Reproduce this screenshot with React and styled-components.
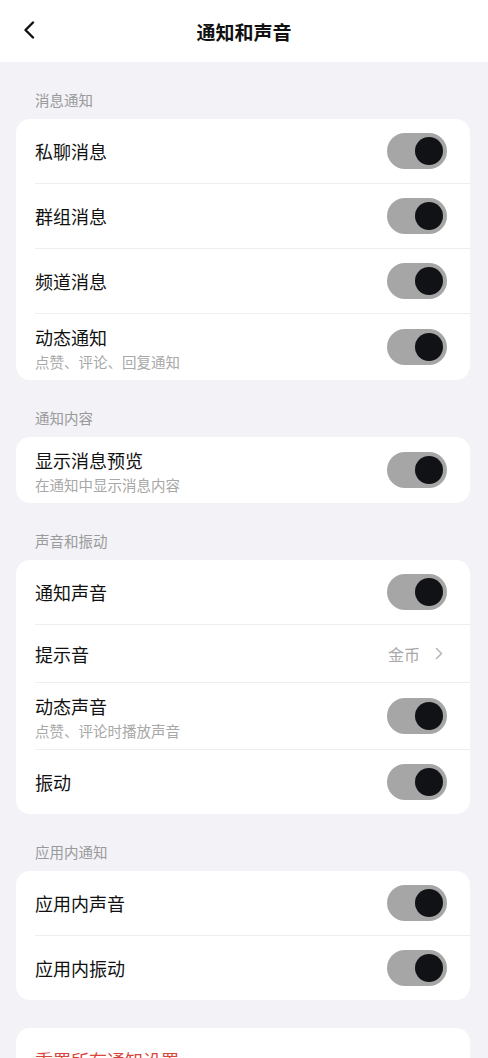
import React, { useState } from 'react';
import styled, { createGlobalStyle } from 'styled-components';

const GlobalStyle = createGlobalStyle`
  body {
    margin: 0;
    background: #f2f2f7;
    font-family: 'Noto Sans CJK SC', 'Noto Sans', sans-serif;
    color: #111;
  }
`;

const sections = [
  {
    title: '消息通知',
    items: [
      { key: 'private', label: '私聊消息' },
      { key: 'group', label: '群组消息' },
      { key: 'channel', label: '频道消息' },
      { key: 'feed', label: '动态通知', sub: '点赞、评论、回复通知' }
    ]
  },
  {
    title: '通知内容',
    items: [{ key: 'preview', label: '显示消息预览', sub: '在通知中显示消息内容' }]
  },
  {
    title: '声音和振动',
    items: [
      { key: 'sound', label: '通知声音' },
      { key: 'tone', label: '提示音', value: '金币' },
      { key: 'feedSound', label: '动态声音', sub: '点赞、评论时播放声音' },
      { key: 'vibrate', label: '振动' }
    ]
  },
  {
    title: '应用内通知',
    items: [
      { key: 'inAppSound', label: '应用内声音' },
      { key: 'inAppVibrate', label: '应用内振动' }
    ]
  }
];

const App = () => {
  const [toggles, setToggles] = useState({});

  const flip = key => setToggles(t => ({ ...t, [key]: t[key] === false }));

  return (
    <Page>
      <GlobalStyle />
      <Header>
        <BackButton aria-label="返回">
          <svg width="14" height="18" viewBox="0 0 14 18" fill="none">
            <path d="M11 1.5L3.5 9L11 16.5" stroke="#111" strokeWidth="2.4" strokeLinecap="round" strokeLinejoin="round" />
          </svg>
        </BackButton>
        <Title>通知和声音</Title>
      </Header>

      <Content>
        {sections.map(section => (
          <Section key={section.title}>
            <SectionLabel>{section.title}</SectionLabel>
            <Card>
              {section.items.map(item => (
                <Row key={item.key} $compact={!!item.value}>
                  <TextBlock $twoLine={!!item.sub}>
                    <Label>{item.label}</Label>
                    {item.sub && <Sub>{item.sub}</Sub>}
                  </TextBlock>
                  {item.value ? (
                    <Value>
                      {item.value}
                      <svg width="8" height="13" viewBox="0 0 8 13" fill="none">
                        <path d="M1.5 1.5L6.5 6.5L1.5 11.5" stroke="#b8b8b8" strokeWidth="1.6" strokeLinecap="round" strokeLinejoin="round" />
                      </svg>
                    </Value>
                  ) : (
                    <Switch $on={toggles[item.key] !== false} onClick={() => flip(item.key)}>
                      <Knob />
                    </Switch>
                  )}
                </Row>
              ))}
            </Card>
          </Section>
        ))}

        <Section>
          <Card>
            <Row>
              <Danger>重置所有通知设置</Danger>
            </Row>
          </Card>
        </Section>
      </Content>
    </Page>
  );
};

const Page = styled.div`
  min-height: 100vh;
  background: #f2f2f7;
`;

const Header = styled.header`
  height: 62px;
  background: #fff;
  display: flex;
  align-items: center;
  justify-content: center;
  position: relative;
`;

const BackButton = styled.button`
  position: absolute;
  left: 22px;
  top: 21px;
  border: none;
  background: none;
  padding: 0;
  display: flex;
`;

const Title = styled.h1`
  margin: 0;
  font-size: 19px;
  font-weight: 700;
  color: #111;
`;

const Content = styled.main`
  padding: 28px 18px 40px 16px;
  display: flex;
  flex-direction: column;
  gap: 28px;
`;

const Section = styled.section`
  display: flex;
  flex-direction: column;
`;

const SectionLabel = styled.div`
  font-size: 14.5px;
  line-height: 20px;
  color: #9a9a9a;
  padding-left: 19px;
  margin-bottom: 9px;
`;

const Card = styled.div`
  background: #fff;
  border-radius: 14px;
  overflow: hidden;
`;

const Row = styled.div`
  box-sizing: content-box;
  min-height: ${p => (p.$compact ? '57px' : '64px')};
  margin-left: 19px;
  padding-right: 23px;
  display: flex;
  align-items: center;
  justify-content: space-between;

  & + & {
    border-top: 1px solid #eeeeee;
  }
`;

const TextBlock = styled.div`
  display: flex;
  flex-direction: column;
  padding: ${p => (p.$twoLine ? '11px 0 8px' : '0')};
`;

const Label = styled.div`
  font-size: 18px;
  line-height: 24px;
  color: #111;
`;

const Sub = styled.div`
  font-size: 14.5px;
  line-height: 20px;
  margin-top: 3px;
  color: #a8a8a8;
`;

const Value = styled.div`
  display: flex;
  align-items: center;
  gap: 15px;
  font-size: 16px;
  color: #a8a8a8;
  padding-right: 4px;
`;

const Switch = styled.button`
  width: 60px;
  height: 36px;
  border: none;
  border-radius: 18px;
  padding: 4px;
  background: #a6a6a6;
  display: flex;
  justify-content: ${p => (p.$on ? 'flex-end' : 'flex-start')};
  align-items: center;
  cursor: pointer;
`;

const Knob = styled.span`
  width: 28px;
  height: 28px;
  border-radius: 50%;
  background: #111216;
`;

const Danger = styled.div`
  font-size: 18px;
  line-height: 24px;
  color: #d9453b;
`;

export default App;
